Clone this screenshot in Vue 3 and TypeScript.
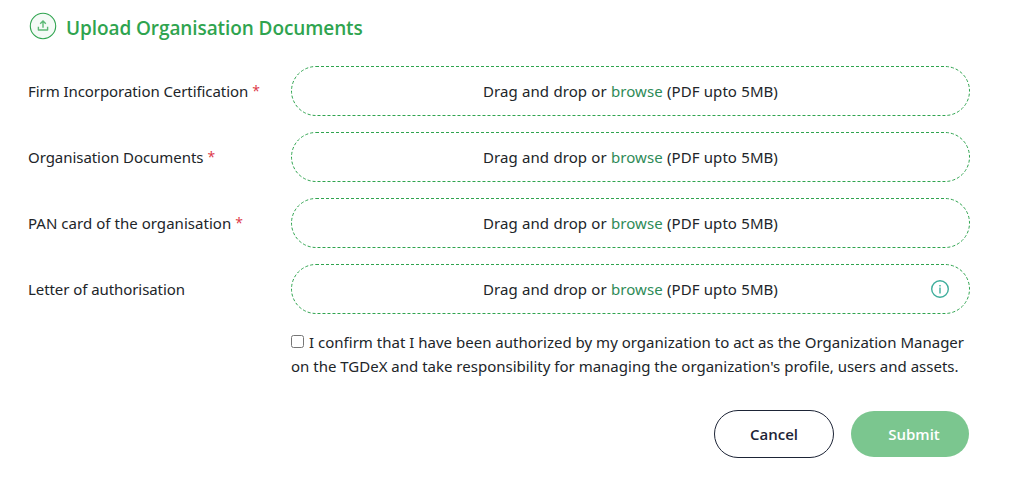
<script setup lang="ts">
import { ref } from 'vue'

interface UploadField {
  key: string
  label: string
  required: boolean
  info: boolean
}

const fields: UploadField[] = [
  { key: 'firm', label: 'Firm Incorporation Certification', required: true, info: false },
  { key: 'docs', label: 'Organisation Documents', required: true, info: false },
  { key: 'pan', label: 'PAN card of the organisation', required: true, info: false },
  { key: 'letter', label: 'Letter of authorisation', required: false, info: true },
]

const confirmed = ref(false)
</script>

<template>
  <main class="page">
    <header class="heading">
      <svg class="heading-icon" width="28" height="28" viewBox="0 0 28 28" fill="none">
        <circle cx="14" cy="14" r="12.7" fill="#f4faf6" stroke="#2fa44f" stroke-width="1.1" />
        <path d="M14 15.8V9.2M11.2 11.7L14 9L16.8 11.7" stroke="#5bb874" stroke-width="1.4" />
        <path d="M9.4 14.8V18H18.6V14.8" stroke="#5bb874" stroke-width="1.4" stroke-linejoin="round" />
      </svg>
      <h1 class="title">Upload Organisation Documents</h1>
    </header>

    <form class="form" @submit.prevent>
      <div v-for="field in fields" :key="field.key" class="row">
        <div class="label">
          <span :class="['label-text', field.key]">{{ field.label }}</span>
          <span v-if="field.required" class="star">*</span>
        </div>
        <div class="dropzone">
          <svg class="outline" width="679" height="50" viewBox="0 0 679 50" fill="none">
            <rect x="0.5" y="0.5" width="678" height="49" rx="24.5" stroke="#2fa44f" stroke-dasharray="3 2" />
          </svg>
          <span class="drop-text">Drag and drop or <span class="browse">browse</span> (PDF upto 5MB)</span>
          <svg v-if="field.info" class="info" width="20" height="20" viewBox="0 0 20 20" fill="none">
            <circle cx="10" cy="10" r="8.3" stroke="#3fae9c" stroke-width="1.4" />
            <path d="M10 8.6V14.4M10 6V7.4" stroke="#3fae9c" stroke-width="1.4" />
          </svg>
        </div>
      </div>

      <label class="confirm">
        <span class="line first">
          <input v-model="confirmed" type="checkbox" class="check" />
          <span class="line-one">I confirm that I have been authorized by my organization to act as the Organization Manager</span>
        </span>
        <span class="line line-two">on the TGDeX and take responsibility for managing the organization's profile, users and assets.</span>
      </label>

      <div class="actions">
        <button type="button" class="btn cancel">Cancel</button>
        <button type="submit" class="btn submit">Submit</button>
      </div>
    </form>
  </main>
</template>

<style>
body {
  background: #fff;
}
</style>

<style scoped>
.page {
  box-sizing: border-box;
  width: 1025px;
  height: 485px;
  padding: 12px 55px 0 28px;
  font-family: "Noto Sans", "Open Sans", sans-serif;
  font-size: 15px;
  line-height: 24px;
  color: #212529;
  overflow: hidden;
}

.heading {
  display: flex;
  align-items: center;
  height: 28px;
  padding-left: 1px;
}

.title {
  margin: 4px 0 0 9px;
  font-family: "Open Sans", "Noto Sans", sans-serif;
  font-size: 19px;
  line-height: 28px;
  font-weight: 600;
  letter-spacing: -0.09px;
  color: #2fa44f;
  white-space: nowrap;
}

.form {
  display: flex;
  flex-direction: column;
  gap: 16px;
  margin-top: 26px;
}

.row {
  display: grid;
  grid-template-columns: 263px 679px;
  align-items: center;
  height: 50px;
}

.label {
  display: flex;
  gap: 4px;
  white-space: nowrap;
}

.firm,
.letter {
  letter-spacing: -0.07px;
}

.docs {
  letter-spacing: -0.05px;
}

.pan {
  letter-spacing: 0.04px;
}

.star {
  font-size: 14px;
  font-family: "Open Sans", sans-serif;
  color: #dc3545;
}

.dropzone {
  position: relative;
  display: flex;
  align-items: center;
  justify-content: center;
  height: 50px;
  border-radius: 25px;
}

.outline {
  position: absolute;
  inset: 0;
}

.drop-text {
  letter-spacing: 0.05px;
  word-spacing: 0.35px;
  white-space: nowrap;
}

.browse {
  color: #2e8b57;
}

.info {
  position: absolute;
  right: 20px;
  top: 15px;
}

.confirm {
  display: flex;
  flex-direction: column;
  margin-left: 263px;
}

.line {
  height: 24px;
  white-space: nowrap;
}

.line-one {
  letter-spacing: 0.01px;
}

.first {
  display: flex;
  align-items: flex-start;
}

.check {
  width: 13px;
  height: 13px;
  margin: 5px 5px 0 0;
}

.actions {
  display: flex;
  align-items: center;
  justify-content: flex-end;
  gap: 17px;
  margin: 16px 1px 0 0;
}

.btn {
  box-sizing: border-box;
  padding: 0;
  font-family: "Open Sans", "Noto Sans", sans-serif;
  font-size: 15px;
  line-height: 24px;
  font-weight: 600;
  border-radius: 24px;
}

.cancel {
  width: 120px;
  height: 48px;
  color: #1d2436;
  background: #fff;
  border: 1px solid #1d2436;
}

.submit {
  width: 118px;
  height: 46px;
  padding-left: 8px;
  color: #fff;
  background: #7bc68f;
  border: 0;
}
</style>
